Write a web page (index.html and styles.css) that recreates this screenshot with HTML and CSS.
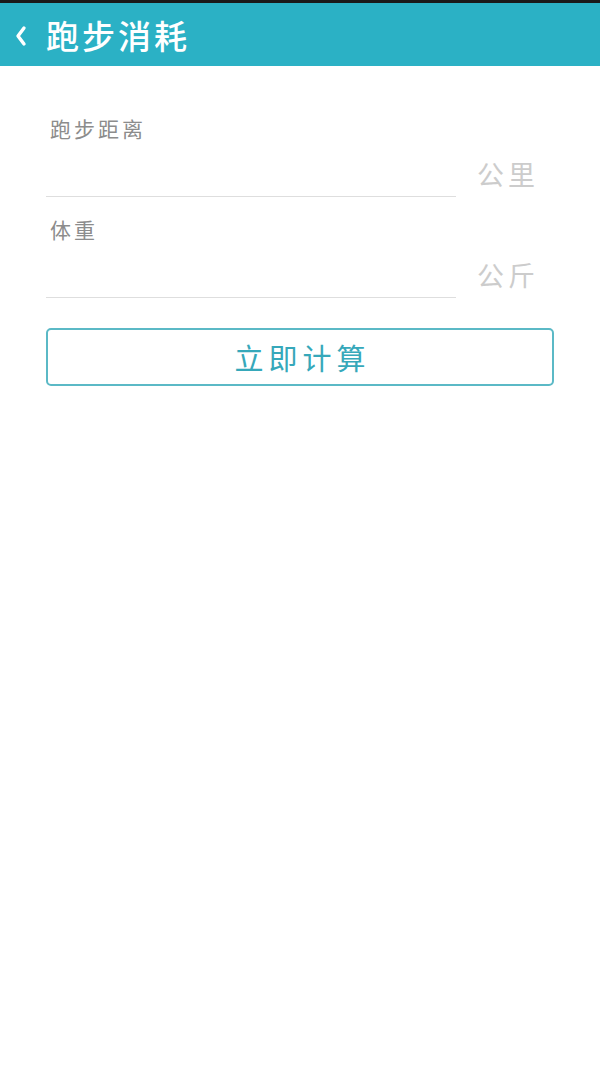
FILE: index.html
```html
<!DOCTYPE html>
<html lang="zh">
<head>
<meta charset="utf-8">
<link rel="stylesheet" href="styles.css">
</head>
<body>
<div class="status"></div>
<header class="bar">
  <svg class="back" width="14" height="22" viewBox="0 0 14 22"><path d="M10 3 L4 11 L10 19" fill="none" stroke="#fff" stroke-width="3.4" stroke-linecap="round" stroke-linejoin="round"/></svg>
  <h1 class="title">跑步消耗</h1>
</header>
<main class="form">
  <div class="field">
    <div class="label">跑步距离</div>
    <div class="row">
      <div class="input"></div>
      <div class="unit">公里</div>
    </div>
  </div>
  <div class="field">
    <div class="label">体重</div>
    <div class="row">
      <div class="input"></div>
      <div class="unit">公斤</div>
    </div>
  </div>
  <button class="btn">立即计算</button>
</main>
</body>
</html>
```
FILE: styles.css
```css
html, body {
  margin: 0;
  padding: 0;
  background: #fff;
  font-family: "Noto Sans CJK SC", "Noto Sans", sans-serif;
}
.status {
  height: 3px;
  background: #1a1a1a;
}
.bar {
  height: 63px;
  background: #2bb1c5;
  display: flex;
  align-items: center;
  padding-left: 14px;
}
.back {
  display: block;
  margin-right: 18px;
  margin-top: 2px;
}
.title {
  margin: 0;
  color: #fff;
  font-size: 33px;
  font-weight: 500;
  letter-spacing: 3px;
  line-height: 1;
  margin-top: 2px;
}
.form {
  padding: 0 46px;
}
.field {
  display: flex;
  flex-direction: column;
}
.field:first-child {
  padding-top: 48px;
}
.label {
  color: #8c8c8c;
  font-size: 21px;
  letter-spacing: 3px;
  line-height: 28px;
  padding-left: 4px;
}
.row {
  display: flex;
  align-items: flex-end;
}
.input {
  width: 410px;
  height: 54px;
  border-bottom: 1.5px solid #dedede;
}
.unit {
  color: #cccccc;
  font-size: 27px;
  letter-spacing: 4px;
  line-height: 30px;
  margin-left: 21px;
  margin-bottom: 8px;
}
.field + .field {
  margin-top: 18px;
}
.btn {
  display: block;
  width: 508px;
  height: 58px;
  margin-top: 30px;
  border: 2px solid #5bb9c6;
  border-radius: 5px;
  background: #fff;
  color: #36a8ba;
  font-family: "Noto Sans CJK SC", "Noto Sans", sans-serif;
  font-size: 29px;
  letter-spacing: 5px;
  padding: 0 0 0 5px;
  line-height: 1;
}
```
